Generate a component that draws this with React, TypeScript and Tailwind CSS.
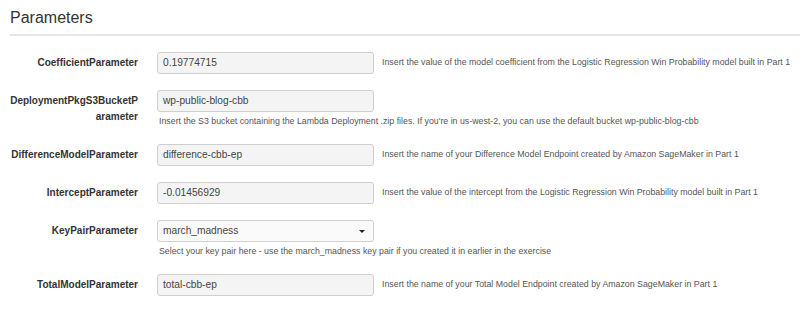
import React from "react";

type Row = {
  label: React.ReactNode;
  value: string;
  help: string;
  below?: boolean;
  select?: boolean;
};

const rows: Row[] = [
  {
    label: "CoefficientParameter",
    value: "0.19774715",
    help: "Insert the value of the model coefficient from the Logistic Regression Win Probability model built in Part 1",
  },
  {
    label: (
      <>
        DeploymentPkgS3BucketP
        <br />
        arameter
      </>
    ),
    value: "wp-public-blog-cbb",
    help: "Insert the S3 bucket containing the Lambda Deployment .zip files. If you're in us-west-2, you can use the default bucket wp-public-blog-cbb",
    below: true,
  },
  {
    label: "DifferenceModelParameter",
    value: "difference-cbb-ep",
    help: "Insert the name of your Difference Model Endpoint created by Amazon SageMaker in Part 1",
  },
  {
    label: "InterceptParameter",
    value: "-0.01456929",
    help: "Insert the value of the intercept from the Logistic Regression Win Probability model built in Part 1",
  },
  {
    label: "KeyPairParameter",
    value: "march_madness",
    help: "Select your key pair here - use the march_madness key pair if you created it in earlier in the exercise",
    below: true,
    select: true,
  },
  {
    label: "TotalModelParameter",
    value: "total-cbb-ep",
    help: "Insert the name of your Total Model Endpoint created by Amazon SageMaker in Part 1",
  },
];

function Field({ row }: { row: Row }) {
  return (
    <div
      className={
        "flex h-[22px] w-[217px] shrink-0 items-center justify-between rounded-[3px] border border-[#cfcfcf] pl-[5px] pr-[8px] text-[10.2px] text-[#444] " +
        (row.select ? "bg-[#fafafa]" : "bg-[#f4f4f4]")
      }
    >
      <span>{row.value}</span>
      {row.select && (
        <span className="h-0 w-0 border-x-[3px] border-t-[3px] border-x-transparent border-t-[#222]" />
      )}
    </div>
  );
}

export default function App() {
  return (
    <div
      className="h-[313px] w-[800px] overflow-hidden bg-white pl-[10px]"
      style={{ fontFamily: '"Liberation Sans", Arial, sans-serif' }}
    >
      <h2 className="pt-[9px] text-[16px] leading-[18px] text-[#333]">Parameters</h2>
      <div className="mt-[7px] h-[2px] bg-[#e6e6e6]" />
      <div className="mt-[16px] flex flex-col gap-[16px]">
        {rows.map((row, i) => (
          <div key={i} className="flex items-start">
            <div className="w-[128px] shrink-0 pt-[3px] text-right text-[10px] font-bold leading-[16px] text-[#333]">
              {row.label}
            </div>
            <div className="ml-[19px]">
              {row.below ? (
                <div>
                  <Field row={row} />
                  <div className="mt-[3px] whitespace-nowrap pl-[2px] text-[8.8px] leading-[13px] text-[#555]">
                    {row.help}
                  </div>
                </div>
              ) : (
                <div className="flex items-center">
                  <Field row={row} />
                  <div className="ml-[8px] whitespace-nowrap text-[8.8px] text-[#555]">{row.help}</div>
                </div>
              )}
            </div>
          </div>
        ))}
      </div>
    </div>
  );
}
